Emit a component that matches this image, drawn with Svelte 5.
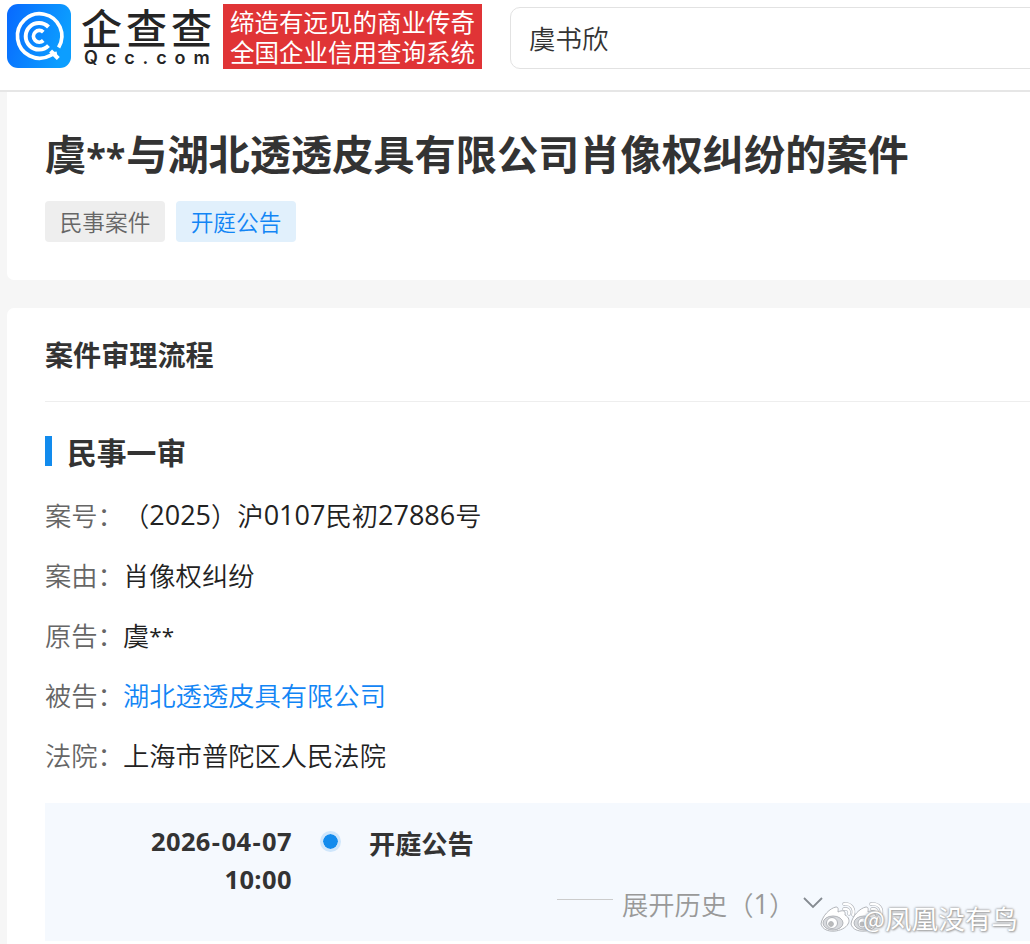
<script>
  const fields = [
    { label: '案号', parts: [['（', 'p'], ['2025', 'n'], ['）', 'p'], ['沪', ''], ['0107', 'n'], ['民初', ''], ['27886', 'n'], ['号', '']] },
    { label: '案由', parts: [['肖像权纠纷', '']] },
    { label: '原告', parts: [['虞', ''], ['**', 'star']] },
    { label: '被告', parts: [['湖北透透皮具有限公司', '']], link: true },
    { label: '法院', parts: [['上海市普陀区人民法院', '']] }
  ];
</script>

<div class="page">
  <header>
    <svg class="mark" viewBox="0 0 64 64" width="64" height="64">
      <defs>
        <linearGradient id="blue" x1="0" y1="0" x2="1" y2="0.3">
          <stop offset="0" stop-color="#0869ff" />
          <stop offset="1" stop-color="#0c9eff" />
        </linearGradient>
      </defs>
      <rect width="64" height="64" rx="11" fill="url(#blue)" />
      <g fill="none" stroke="#fff">
        <path d="M51.6 43.5A22.2 22.2 0 1 0 43 51.6L46.4 49.8" stroke-width="3.7" />
        <path d="M43.6 47L51.3 54.4M46 50.4L50 49.6" stroke-width="4.2" />
        <path d="M41.5 23A13.3 13.3 0 1 0 41.5 41.6" stroke-width="4" />
        <path d="M36.3 28.1A5.8 5.8 0 1 0 36.3 36.5" stroke-width="3.8" />
      </g>
    </svg>
    <div class="brand">
      <div class="brand-cn">企查查</div>
      <div class="brand-en">Qcc.com</div>
    </div>
    <div class="slogan">
      <div>缔造有远见的商业传奇</div>
      <div>全国企业信用查询系统</div>
    </div>
    <div class="search">虞书欣</div>
  </header>

  <section class="card summary">
    <h1>虞<span class="stars">**</span>与湖北透透皮具有限公司肖像权纠纷的案件</h1>
    <div class="tags">
      <span class="tag">民事案件</span>
      <span class="tag active">开庭公告</span>
    </div>
  </section>

  <section class="card detail">
    <h2>案件审理流程</h2>
    <h3><i></i>民事一审</h3>
    <div class="fields">
      {#each fields as f}
        <div class="row">
          <span class="label">{f.label}：</span>
          <span class="value" class:link={f.link}>{#each f.parts as [text, kind]}<span class={kind}>{text}</span>{/each}</span>
        </div>
      {/each}
    </div>
    <div class="timeline">
      <div class="when"><div>2026<span class="dash">-</span>04<span class="dash">-</span>07</div><div>10:00</div></div>
      <div class="dot"></div>
      <div class="event">开庭公告</div>
      <div class="more">
        <span class="line"></span>
        <span class="more-text">展开历史<span class="count">（<span class="n">1</span>）</span></span>
        <svg width="22" height="14" viewBox="0 0 22 14"><path d="M2 2L11 11L20 2" fill="none" stroke="#858b91" stroke-width="1.8" /></svg>
      </div>
    </div>
  </section>

  <div class="credit">
    <svg width="68" height="34" viewBox="0 0 68 34">
      <g fill="#fff" stroke="#b2b5ba" stroke-width="1">
        <g transform="translate(30 0)">
          <path d="M1 23C2 15 10 7 16 6C19 6 18 9 18 11C22 9 26 9 25 14C29 16 30 20 28 23C24 31 4 34 1 23Z" />
          <ellipse cx="14" cy="22" rx="10" ry="7" fill="#d5d8dc" />
          <circle cx="13" cy="22" r="5" />
          <circle cx="12" cy="23" r="2" fill="#bbb" />
        </g>
        <g>
          <path d="M1 23C2 15 10 7 16 6C19 6 18 9 18 11C22 9 26 9 25 14C29 16 30 20 28 23C24 31 4 34 1 23Z" />
          <ellipse cx="13" cy="22" rx="10" ry="7" fill="#d8dade" />
          <circle cx="12" cy="22" r="5.5" />
          <circle cx="11" cy="23" r="2.4" fill="#bbb" />
        </g>
      </g>
      <g fill="none" stroke="#b2b5ba" stroke-width="3.4" stroke-linecap="round">
        <path d="M24 3C31 2 35 8 33 14M24 8C28 7 30 10 29 13M51 3C59 2 63 8 61 14M52 8C56 7 58 10 57 13" />
      </g>
      <g fill="none" stroke="#fff" stroke-width="2.2" stroke-linecap="round">
        <path d="M24 3C31 2 35 8 33 14M24 8C28 7 30 10 29 13M51 3C59 2 63 8 61 14M52 8C56 7 58 10 57 13" />
      </g>
    </svg>
    <span class="at">@</span><span>凤凰没有鸟</span>
  </div>
</div>

<style>
  :global(body) { margin: 0; background: #f6f6f6; }
  .page {
    position: relative;
    width: 1030px;
    height: 944px;
    overflow: hidden;
    box-sizing: border-box;
    background: #f6f6f6;
    font-family: 'Noto Sans CJK SC', sans-serif;
    color: #333;
    white-space: nowrap;
  }
  header {
    display: flex;
    align-items: flex-start;
    height: 92px;
    box-sizing: border-box;
    padding: 4px 0 0 7px;
    background: #fff;
    border-bottom: 2px solid #e6e6e6;
  }
  .mark { flex: none; }
  .brand { flex: none; width: 140px; margin-left: 10px; color: #252525; }
  .brand-cn {
    height: 44px;
    line-height: 44px;
    font-size: 41px;
    font-weight: 500;
    letter-spacing: 4px;
  }
  .brand-en {
    padding-left: 3px;
    font: 600 18px/20px 'Inter', sans-serif;
    letter-spacing: 7.9px;
  }
  .slogan {
    flex: none;
    box-sizing: border-box;
    width: 259px;
    height: 65px;
    margin-left: 2px;
    padding: 3px 0 0 7px;
    background: #e03436;
    color: #fff;
    font-size: 24.5px;
    font-weight: 400;
    line-height: 29.5px;
  }
  .search {
    flex: none;
    box-sizing: border-box;
    width: 560px;
    height: 62px;
    margin: 3px 0 0 28px;
    padding-left: 18px;
    border: 1px solid #e2e2e2;
    border-radius: 10px;
    font-size: 26.5px;
    font-weight: 350;
    line-height: 60px;
  }
  .card { margin-left: 7px; background: #fff; padding-left: 38px; }
  .summary { height: 188px; box-sizing: border-box; padding-top: 29px; border-radius: 0 0 0 7px; }
  h1, h2, h3 { margin: 0; font-weight: 700; }
  h1 { font-size: 41.2px; line-height: 62px; height: 62px; }
  .stars {
    display: inline-block;
    width: 40px;
    font-family: 'Open Sans', sans-serif;
    font-size: 36px;
    font-weight: 700;
    line-height: 40px;
  }
  .tags { display: flex; gap: 11px; margin-top: 18px; }
  .tag {
    width: 120px;
    height: 41px;
    border-radius: 4px;
    background: #eee;
    color: #666;
    font-size: 22.7px;
    font-weight: 350;
    line-height: 42px;
    text-align: center;
  }
  .tag.active { background: #e1f0fc; color: #1285f5; }
  .detail { margin-top: 28px; height: 636px; border-radius: 7px 0 0 0; }
  h2 {
    height: 93px;
    border-bottom: 1px solid #eee;
    font-size: 28.1px;
    line-height: 92px;
  }
  h3 {
    display: flex;
    align-items: center;
    gap: 15px;
    height: 48px;
    margin-top: 25px;
    font-size: 29.8px;
    line-height: 50px;
  }
  h3 i { width: 7px; height: 30px; background: #128bed; }
  .fields { padding-top: 11px; }
  .row { display: flex; height: 60px; font-size: 26.3px; line-height: 58px; font-weight: 350; }
  .label { width: 78px; color: #666; }
  .value { color: #222; }
  .value.link { color: #1285f5; }
  .n { font-family: 'Open Sans', sans-serif; font-size: 27px; font-weight: 400; line-height: 30px; vertical-align: 1px; }
  .star { font-family: 'Open Sans', sans-serif; line-height: 30px; font-weight: 400; font-size: 22.5px; vertical-align: 2px; }
  .timeline {
    display: flex;
    align-items: flex-start;
    height: 138px;
    margin-top: 17px;
    background: #f5f9fe;
  }
  .when {
    width: 247px;
    padding-top: 19px;
    text-align: right;
    font-family: 'Open Sans', sans-serif;
    font-size: 25.5px;
    font-weight: 700;
    line-height: 38px;
    letter-spacing: 0.4px;
  }
  .dash { padding: 0 1px; }
  .dot {
    width: 15px;
    height: 15px;
    margin: 28px 0 0 28px;
    border: 3px solid #cfe6fb;
    border-radius: 50%;
    background: #128bed;
    background-clip: padding-box;
  }
  .event { width: 105px; margin-left: 28px; padding-top: 21px; font-size: 26.2px; font-weight: 700; line-height: 38px; }
  .more { display: flex; align-items: center; margin: 81px 0 0 83px; height: 40px; color: #999; }
  .line { width: 56px; height: 1px; margin: -9px 9px 0 0; background: #ccc; }
  .more-text { width: 180px; height: 40px; font-size: 26.3px; font-weight: 350; line-height: 39px; }
  .more svg { margin-top: -2px; }
  .credit {
    position: absolute;
    left: 820px;
    top: 901px;
    display: flex;
    height: 36px;
    color: #fff;
    font-size: 26.6px;
    line-height: 34px;
    text-shadow: 0 0 2px #999, 1px 1px 2px #aaa, 0 0 3px #aaa;
  }
  .at { margin-left: -25px; width: 22px; font-size: 23px; }
</style>
